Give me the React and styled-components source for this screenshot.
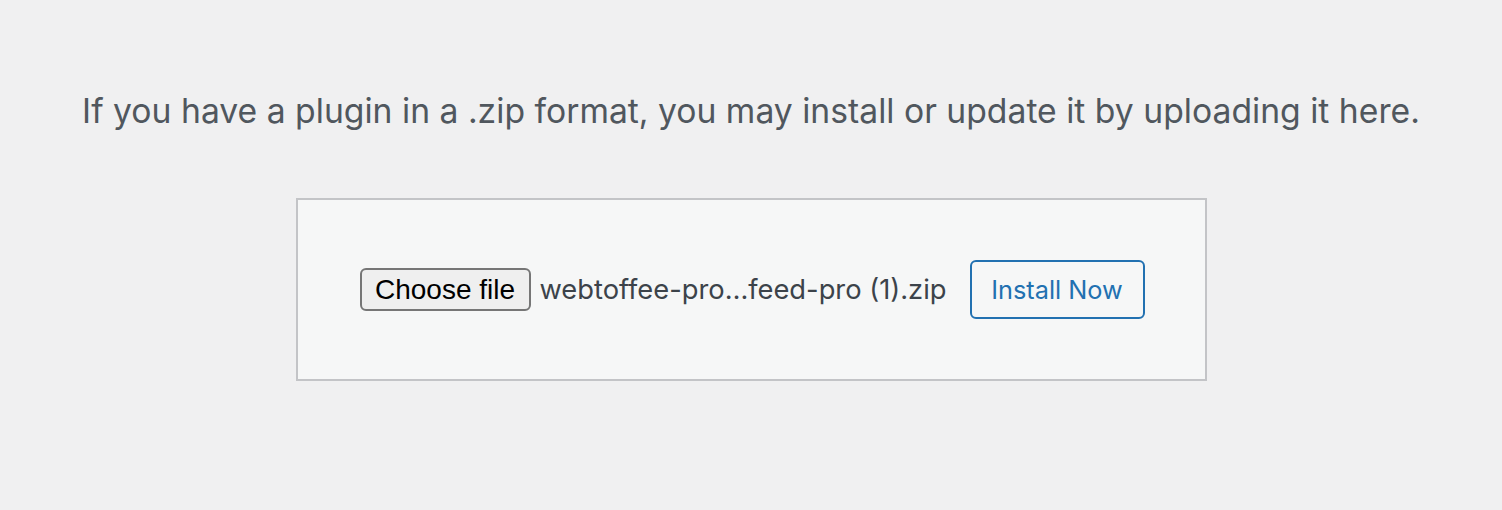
import React from "react";
import styled, { createGlobalStyle } from "styled-components";

const Global = createGlobalStyle`
  html, body { margin: 0; padding: 0; background: #f0f0f1; }
  body { font-family: Inter, "Liberation Sans", sans-serif; }
`;

const Page = styled.div`
  height: 510px;
  display: flex;
  flex-direction: column;
  align-items: center;
  padding-top: 89px;
  box-sizing: border-box;
`;

const HelpText = styled.p`
  margin: 0;
  font-family: Inter, "Liberation Sans", sans-serif;
  font-size: 33.7px;
  line-height: 44px;
  color: #50575e;
  text-align: center;
  white-space: nowrap;
`;

const UploadForm = styled.form`
  margin-top: 65px;
  width: 911px;
  height: 183px;
  box-sizing: border-box;
  background: #f6f7f7;
  border: 2px solid #c3c4c7;
  padding: 0 60px 0 62px;
  display: flex;
  align-items: center;
  justify-content: space-between;
`;

const FileField = styled.div`
  display: flex;
  align-items: center;
  gap: 9px;
`;

const ChooseButton = styled.button`
  height: 43px;
  width: 171px;
  box-sizing: border-box;
  background: #efefef;
  border: 2px solid #767676;
  border-radius: 6px;
  font-family: "Liberation Sans", Arial, sans-serif;
  font-size: 28px;
  color: #000;
  padding: 0;
  display: flex;
  align-items: center;
  justify-content: center;
`;

const FileName = styled.span`
  font-family: Inter, "Liberation Sans", sans-serif;
  font-size: 27.3px;
  color: #3c434a;
  white-space: nowrap;
`;

const InstallButton = styled.button`
  height: 59px;
  width: 175px;
  box-sizing: border-box;
  background: #f6f7f7;
  border: 2px solid #2271b1;
  border-radius: 6px;
  color: #2271b1;
  font-family: Inter, "Liberation Sans", sans-serif;
  font-size: 25.3px;
  padding: 0;
  display: flex;
  align-items: center;
  justify-content: center;
`;

export default function App() {
  return (
    <>
      <Global />
      <Page>
        <HelpText>
          If you have a plugin in a .zip format, you may install or update it by uploading it here.
        </HelpText>
        <UploadForm onSubmit={(e) => e.preventDefault()}>
          <FileField>
            <ChooseButton type="button">Choose file</ChooseButton>
            <FileName>webtoffee-pro…feed-pro (1).zip</FileName>
          </FileField>
          <InstallButton type="submit">Install Now</InstallButton>
        </UploadForm>
      </Page>
    </>
  );
}
